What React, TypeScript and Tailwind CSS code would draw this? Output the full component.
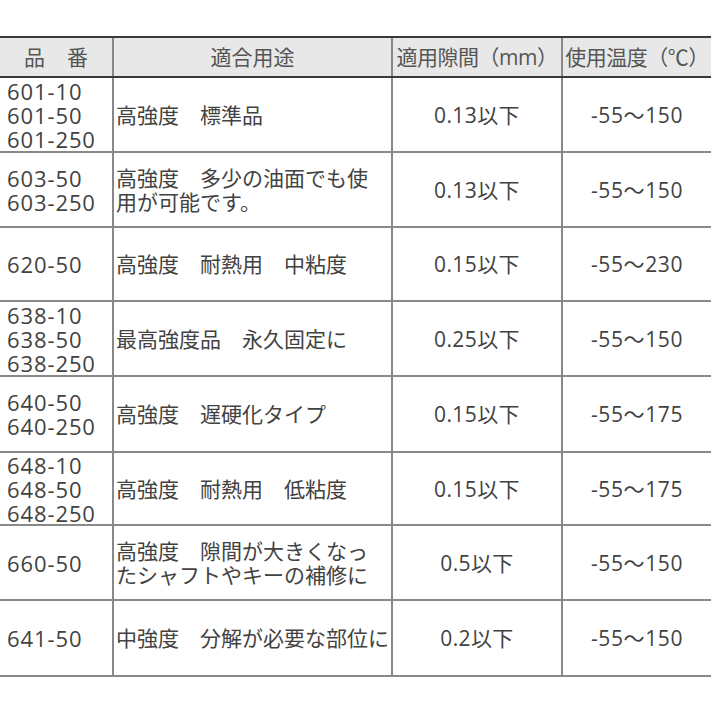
import React from 'react';

type Row = {
  codes: string[];
  use: string[];
  gap: string;
  temp: string;
  h: string;
};

const rows: Row[] = [
  { codes: ['601-10', '601-50', '601-250'], use: ['高強度　標準品'], gap: '0.13以下', temp: '-55～150', h: 'h-[75px]' },
  { codes: ['603-50', '603-250'], use: ['高強度　多少の油面でも使', '用が可能です。'], gap: '0.13以下', temp: '-55～150', h: 'h-[75px]' },
  { codes: ['620-50'], use: ['高強度　耐熱用　中粘度'], gap: '0.15以下', temp: '-55～230', h: 'h-[74px]' },
  { codes: ['638-10', '638-50', '638-250'], use: ['最高強度品　永久固定に'], gap: '0.25以下', temp: '-55～150', h: 'h-[75px]' },
  { codes: ['640-50', '640-250'], use: ['高強度　遅硬化タイプ'], gap: '0.15以下', temp: '-55～175', h: 'h-[76px]' },
  { codes: ['648-10', '648-50', '648-250'], use: ['高強度　耐熱用　低粘度'], gap: '0.15以下', temp: '-55～175', h: 'h-[73px]' },
  { codes: ['660-50'], use: ['高強度　隙間が大きくなっ', 'たシャフトやキーの補修に'], gap: '0.5以下', temp: '-55～150', h: 'h-[75px]' },
  { codes: ['641-50'], use: ['中強度　分解が必要な部位に'], gap: '0.2以下', temp: '-55～150', h: 'h-[76px]' },
];

const font = { fontFamily: '"Open Sans", "Noto Sans CJK JP", sans-serif' };

export default function App() {
  return (
    <div className="w-[713px] h-[713px] bg-white pt-[36px]" style={font}>
      <div className="w-[711px] text-[21px] leading-[24px] text-[#424242]">
        {/* header */}
        <div className="flex h-[42px] border-t-2 border-b-2 border-[#3a3a3a] bg-[#e8e8e8] text-[#555]">
          <div className="w-[112px] flex items-center justify-center gap-[22px]">
            <span>品</span>
            <span>番</span>
          </div>
          <div className="w-[279px] flex items-center justify-center border-l-2 border-[#888]">適合用途</div>
          <div className="w-[170px] flex items-center justify-center border-l-2 border-[#888] tracking-[-0.5px]">
            適用隙間（mm）
          </div>
          <div className="flex-1 flex items-center justify-center border-l-2 border-[#888] tracking-[-0.5px]">
            使用温度（℃）
          </div>
        </div>

        {rows.map((r, i) => (
          <div key={i} className={`flex ${r.h} border-b-2 border-[#8a8a8a]`}>
            <div className="w-[112px] flex flex-col justify-center pl-[7px] text-[22px] tracking-[0.9px]">
              {r.codes.map(c => (
                <span key={c}>{c}</span>
              ))}
            </div>
            <div className="w-[279px] flex flex-col justify-center pl-[2px] border-l-2 border-[#888] whitespace-nowrap">
              {r.use.map(u => (
                <span key={u}>{u}</span>
              ))}
            </div>
            <div className="w-[170px] flex items-center justify-center border-l-2 border-[#888] tracking-[0.4px]">
              {r.gap}
            </div>
            <div className="flex-1 flex items-center justify-center border-l-2 border-[#888] tracking-[0.6px]">
              {r.temp}
            </div>
          </div>
        ))}
      </div>
    </div>
  );
}
